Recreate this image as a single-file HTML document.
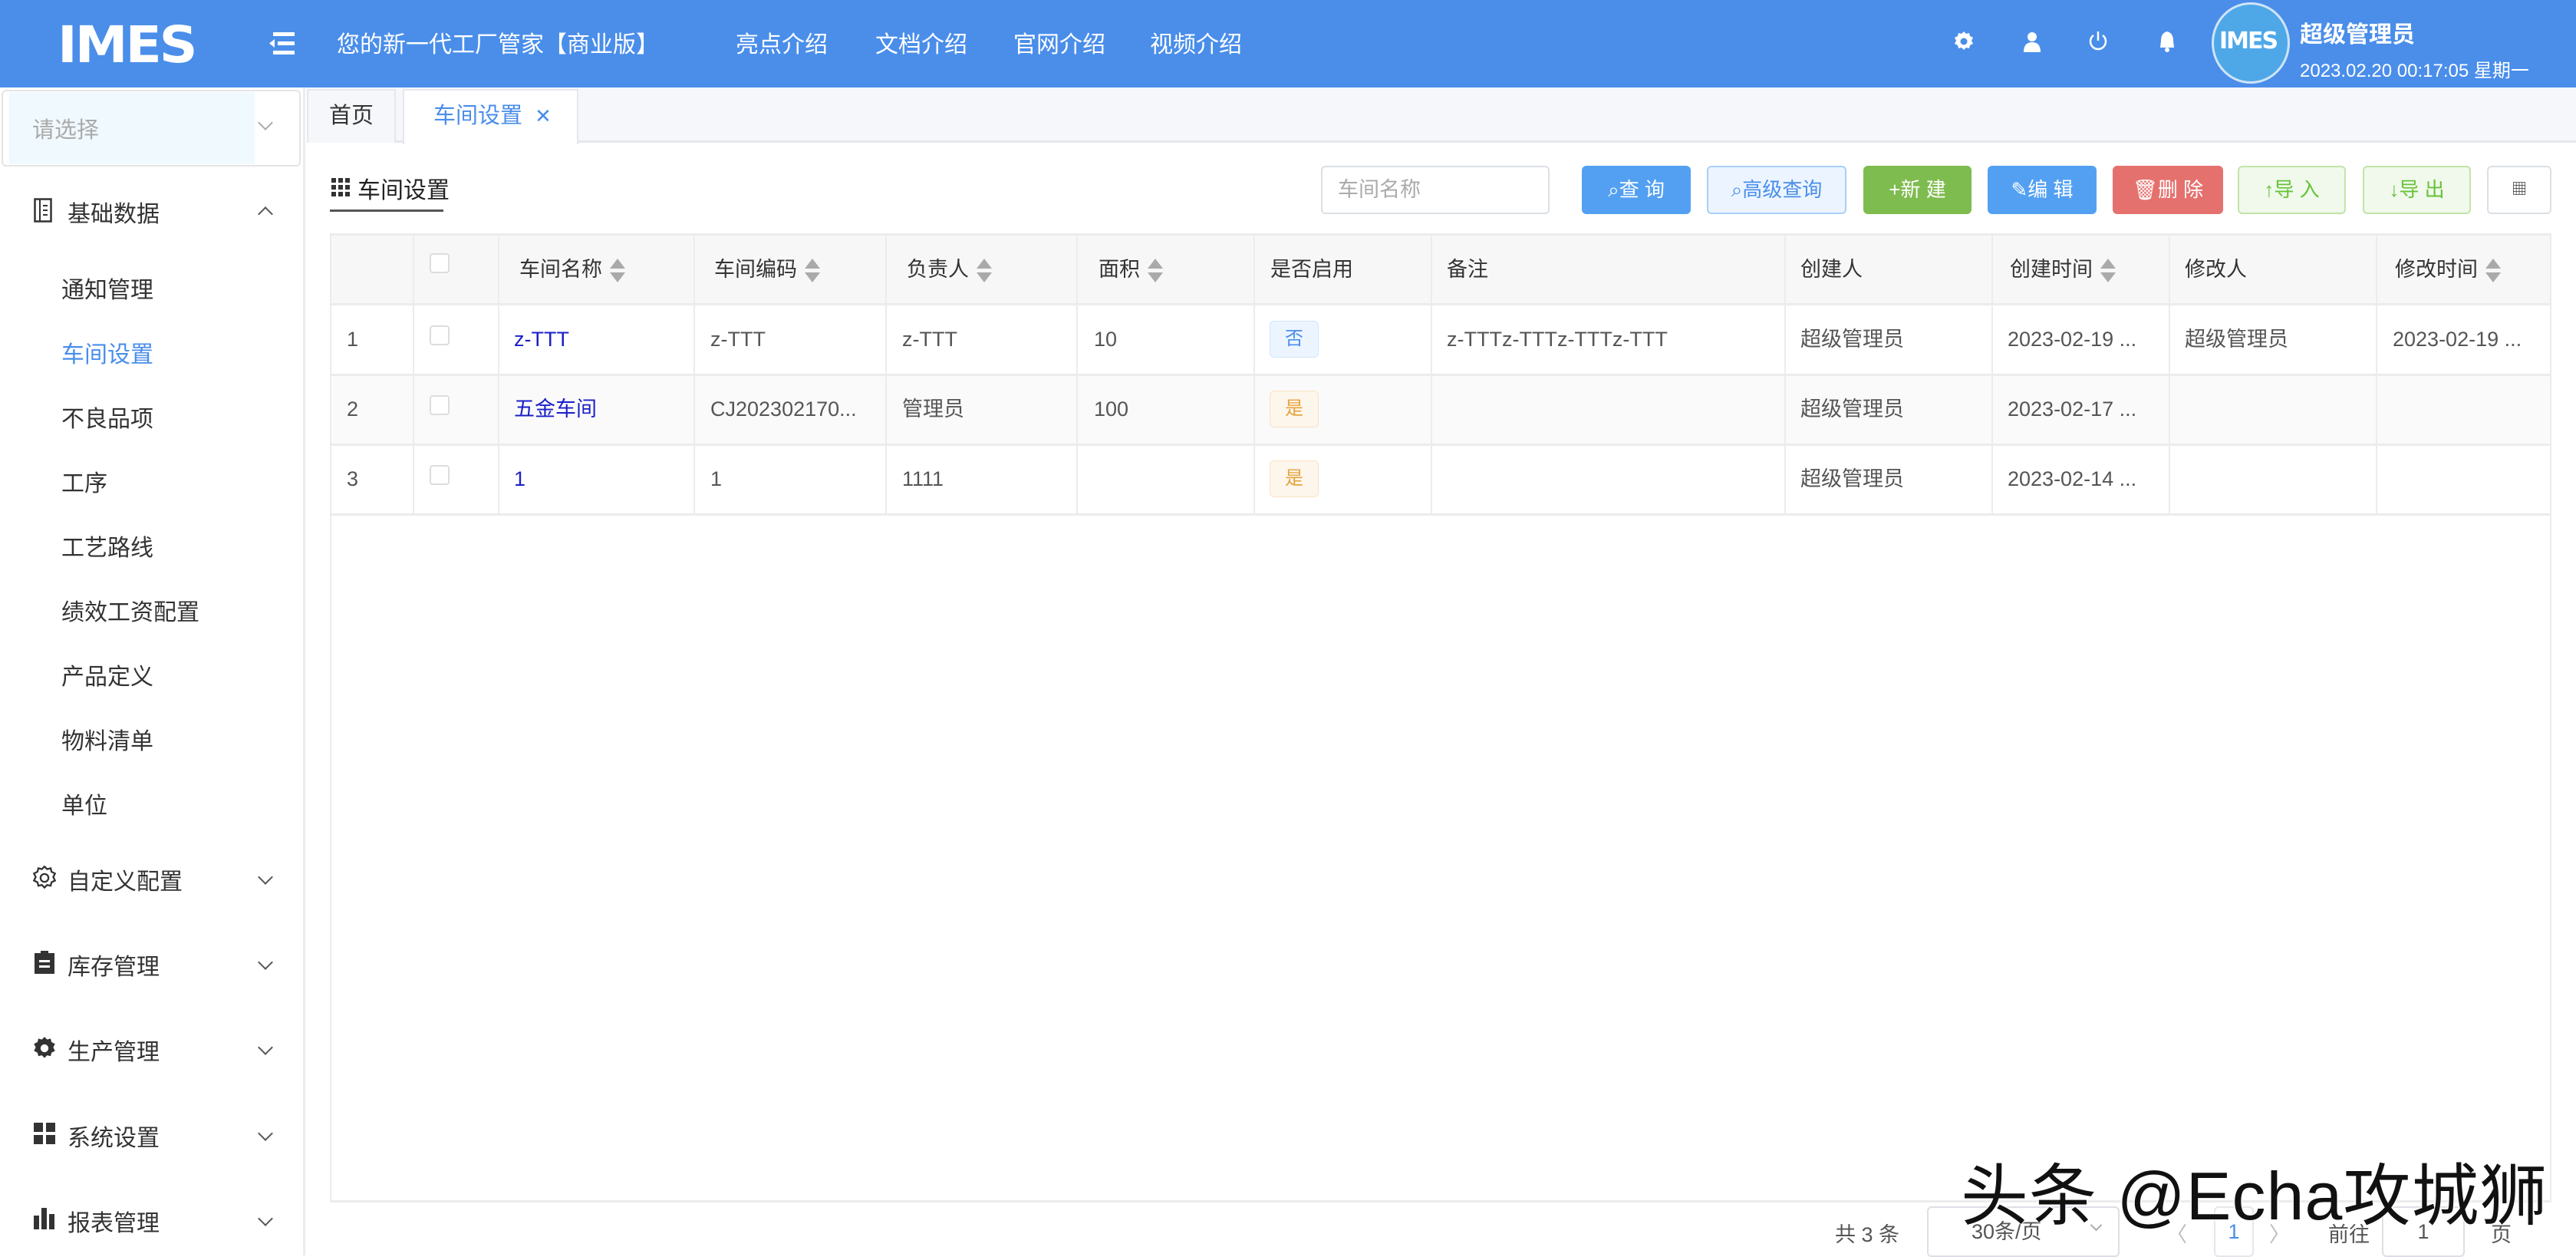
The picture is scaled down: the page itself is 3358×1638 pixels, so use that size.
<!DOCTYPE html>
<html><head><meta charset="utf-8"><style>
*{margin:0;padding:0;box-sizing:border-box}
body{width:3358px;height:1636px;overflow:hidden;background:#fff;font-family:"Liberation Sans","Noto Sans CJK SC",sans-serif;color:#333;position:relative}
.a{position:absolute;white-space:nowrap}
.hdr{left:0;top:0;width:3358px;height:114px;background:#4a8eea}
.nav{color:#fff;font-size:30px;top:33px}
.side{left:0;top:114px;width:398px;height:1522px;background:#fff;border-right:3px solid #ececec}
.mi{font-size:30px;color:#333;left:80px}
.sm{font-size:30px;color:#333;left:46px}
.chev{width:14px;height:14px;border-right:2px solid #555;border-bottom:2px solid #555;transform:rotate(45deg);left:339px}
.th{top:306px;height:90px;background:#f7f7f8;font-size:27px;color:#333;line-height:90px}
.cell{font-size:27px;color:#555;line-height:91px}
.vl{width:2px;background:#ececee}
.hl{height:3px;background:#ececee;left:430px;width:2896px}
.btn{top:216px;height:63px;border-radius:6px;font-size:26px;line-height:63px;text-align:center;color:#fff}
.sort{display:inline-block;vertical-align:middle;margin-left:10px;width:20px;height:34px;position:relative}
.sort:before{content:"";position:absolute;left:0;top:1px;border:10px solid transparent;border-bottom:13px solid #aaa;border-top:0}
.sort:after{content:"";position:absolute;left:0;top:19px;border:10px solid transparent;border-top:13px solid #aaa;border-bottom:0}
.cb{width:26px;height:26px;border:2px solid #ddd;border-radius:4px;background:#fff}
.tag{width:64px;height:48px;border-radius:6px;font-size:24px;line-height:46px;text-align:center}
</style></head><body>
<div class="a hdr"></div>
<div class="a" style="left:75px;top:20px;font-size:66px;font-weight:900;color:#fff;letter-spacing:-3px;font-family:'DejaVu Sans',sans-serif;transform:scaleX(1.05);transform-origin:left">IMES</div>
<svg class="a" style="left:348px;top:42px" width="36" height="30"><rect x="8" y="0" width="28" height="5" fill="#fff"/><rect x="14" y="12" width="22" height="5" fill="#fff"/><rect x="8" y="24" width="28" height="5" fill="#fff"/><path d="M10 9 L3 14.5 L10 20Z" fill="#fff"/></svg>
<div class="a nav" style="left:439px">您的新一代工厂管家【商业版】</div>
<div class="a nav" style="left:959px">亮点介绍</div>
<div class="a nav" style="left:1141px">文档介绍</div>
<div class="a nav" style="left:1321px">官网介绍</div>
<div class="a nav" style="left:1499px">视频介绍</div>
<svg class="a" style="left:2547px;top:40px" width="26" height="28" viewBox="0 0 26 28"><path d="M13 1l3 3 4-1 1 4 4 2-2 4 2 4-4 2-1 4-4-1-3 3-3-3-4 1-1-4-4-2 2-4-2-4 4-2 1-4 4 1z" fill="#fff"/><circle cx="13" cy="14" r="4.5" fill="#4a8eea"/></svg>
<svg class="a" style="left:2637px;top:40px" width="24" height="28"><circle cx="12" cy="8" r="6" fill="#fff"/><path d="M1 28 Q1 15 12 15 Q23 15 23 28Z" fill="#fff"/></svg>
<svg class="a" style="left:2722px;top:39px" width="26" height="30"><path d="M7 7 A10 10 0 1 0 19 7" stroke="#fff" stroke-width="2.5" fill="none"/><line x1="13" y1="2" x2="13" y2="14" stroke="#fff" stroke-width="2.5"/></svg>
<svg class="a" style="left:2813px;top:39px" width="24" height="30"><path d="M12 2 Q4 4 4 14 L3 23 H21 L20 14 Q20 4 12 2Z" fill="#fff"/><circle cx="12" cy="26" r="3" fill="#fff"/></svg>
<div class="a" style="left:2883px;top:3px;width:102px;height:106px;border-radius:50%;background:#4ea8e8;border:3px solid #cfe4f8"></div>
<div class="a" style="left:2893px;top:36px;font-size:30px;font-weight:900;color:#fff;font-family:'DejaVu Sans',sans-serif;letter-spacing:-2px">IMES</div>
<div class="a" style="left:2998px;top:20px;font-size:30px;color:#fff;font-weight:bold">超级管理员</div>
<div class="a" style="left:2998px;top:72px;font-size:24px;color:#fff">2023.02.20 00:17:05 星期一</div>

<div class="a side"></div>
<div class="a" style="left:2px;top:117px;height:100px;border:2px solid #e4e4e4;border-radius:6px;width:390px"></div>
<div class="a" style="left:12px;top:120px;width:320px;height:94px;background:#f0f9fe"></div>
<div class="a" style="left:42px;top:146px;font-size:29px;color:#aaa">请选择</div>
<div class="a chev" style="top:153px;border-color:#aaa"></div>
<svg class="a" style="left:44px;top:258px" width="24" height="32"><rect x="1.5" y="1.5" width="21" height="29" fill="none" stroke="#333" stroke-width="2.5"/><line x1="8" y1="2" x2="8" y2="30" stroke="#333" stroke-width="2"/><line x1="12" y1="10" x2="18" y2="10" stroke="#333" stroke-width="2"/><line x1="12" y1="16" x2="18" y2="16" stroke="#333" stroke-width="2"/><line x1="12" y1="22" x2="18" y2="22" stroke="#333" stroke-width="2"/></svg>
<div class="a mi" style="top:254px;left:88px">基础数据</div>
<div class="a chev" style="top:272px;transform:rotate(225deg)"></div>
<div class="a sm" style="left:80px;top:353px">通知管理</div>
<div class="a sm" style="left:80px;top:437px;color:#4a8eea">车间设置</div>
<div class="a sm" style="left:80px;top:521px">不良品项</div>
<div class="a sm" style="left:80px;top:605px">工序</div>
<div class="a sm" style="left:80px;top:689px">工艺路线</div>
<div class="a sm" style="left:80px;top:773px">绩效工资配置</div>
<div class="a sm" style="left:80px;top:857px">产品定义</div>
<div class="a sm" style="left:80px;top:941px">物料清单</div>
<div class="a sm" style="left:80px;top:1025px">单位</div>
<svg class="a" style="left:42px;top:1128px" width="32" height="32" viewBox="0 0 26 28"><path d="M13 1l3 3 4-1 1 4 4 2-2 4 2 4-4 2-1 4-4-1-3 3-3-3-4 1-1-4-4-2 2-4-2-4 4-2 1-4 4 1z" fill="none" stroke="#333" stroke-width="2"/><circle cx="13" cy="14" r="4.5" fill="none" stroke="#333" stroke-width="2"/></svg>
<div class="a mi" style="top:1124px;left:88px">自定义配置</div><div class="a chev" style="top:1136px"></div>
<svg class="a" style="left:45px;top:1239px" width="26" height="30"><rect x="0" y="3" width="26" height="27" fill="#333"/><rect x="8" y="0" width="10" height="6" fill="#333"/><rect x="6" y="12" width="14" height="3" fill="#fff"/><rect x="6" y="19" width="14" height="3" fill="#fff"/></svg>
<div class="a mi" style="top:1235px;left:88px">库存管理</div><div class="a chev" style="top:1247px"></div>
<svg class="a" style="left:42px;top:1350px" width="32" height="32" viewBox="0 0 26 28"><path d="M13 1l3 3 4-1 1 4 4 2-2 4 2 4-4 2-1 4-4-1-3 3-3-3-4 1-1-4-4-2 2-4-2-4 4-2 1-4 4 1z" fill="#333"/><circle cx="13" cy="14" r="4.5" fill="#fff"/></svg>
<div class="a mi" style="top:1346px;left:88px">生产管理</div><div class="a chev" style="top:1358px"></div>
<svg class="a" style="left:44px;top:1463px" width="28" height="28"><rect width="12" height="12" fill="#333"/><rect x="16" width="12" height="12" fill="#333"/><rect y="16" width="12" height="12" fill="#333"/><rect x="16" y="16" width="12" height="12" fill="#333"/></svg>
<div class="a mi" style="top:1458px;left:88px">系统设置</div><div class="a chev" style="top:1470px"></div>
<svg class="a" style="left:44px;top:1574px" width="28" height="28"><rect y="10" width="7" height="18" fill="#333"/><rect x="10" y="0" width="7" height="28" fill="#333"/><rect x="20" y="8" width="7" height="20" fill="#333"/></svg>
<div class="a mi" style="top:1569px;left:88px">报表管理</div><div class="a chev" style="top:1581px"></div>

<div class="a" style="left:400px;top:114px;width:2958px;height:72px;background:#f5f7fa;border-bottom:3px solid #e4e7ed"></div>
<div class="a" style="left:400px;top:116px;width:116px;height:70px;border:2px solid #e4e7ed;border-bottom:0;background:#f5f7fa;font-size:29px;line-height:66px;text-align:center">首页</div>
<div class="a" style="left:525px;top:116px;width:229px;height:72px;border:2px solid #e4e7ed;border-bottom:0;background:#fff;font-size:29px;line-height:66px;color:#4a8eea;padding-left:38px">车间设置 <span style="font-size:26px;margin-left:8px">✕</span></div>

<svg class="a" style="left:432px;top:232px" width="24" height="24"><g fill="#333"><rect x="0" y="0" width="6" height="6"/><rect x="9" y="0" width="6" height="6"/><rect x="18" y="0" width="6" height="6"/><rect x="0" y="9" width="6" height="6"/><rect x="9" y="9" width="6" height="6"/><rect x="18" y="9" width="6" height="6"/><rect x="0" y="18" width="6" height="6"/><rect x="9" y="18" width="6" height="6"/><rect x="18" y="18" width="6" height="6"/></g></svg>
<div class="a" style="left:466px;top:223px;font-size:30px;color:#222">车间设置</div>
<div class="a" style="left:430px;top:273px;width:148px;height:3px;background:#555"></div>

<div class="a" style="left:1722px;top:216px;width:298px;height:63px;border:2px solid #dcdfe6;border-radius:6px;font-size:27px;color:#aaa;line-height:59px;padding-left:20px">车间名称</div>
<div class="a btn" style="left:2062px;width:142px;background:#53a0f2">⌕查 询</div>
<div class="a btn" style="left:2225px;width:182px;background:#ecf5ff;border:2px solid #a9cff5;color:#4a8eea;line-height:59px">⌕高级查询</div>
<div class="a btn" style="left:2429px;width:141px;background:#7fbc4f">+新 建</div>
<div class="a btn" style="left:2591px;width:142px;background:#53a0f2">✎编 辑</div>
<div class="a btn" style="left:2754px;width:144px;background:#e5716e">🗑删 除</div>
<div class="a btn" style="left:2917px;width:141px;background:#f0f9eb;border:2px solid #c2e4a8;color:#67c23a;line-height:59px">↑导 入</div>
<div class="a btn" style="left:3080px;width:141px;background:#f0f9eb;border:2px solid #c2e4a8;color:#67c23a;line-height:59px">↓导 出</div>
<div class="a btn" style="left:3242px;width:84px;background:#fff;border:2px solid #dcdfe6;color:#333;line-height:59px;font-size:20px">▦</div>

<div class="a th" style="left:430px;width:2896px"></div>
<div class="a hl" style="top:304px"></div>
<div class="a hl" style="top:395px"></div>
<div class="a" style="left:430px;top:488px;width:2896px;height:91px;background:#fafafa"></div>
<div class="a hl" style="top:487px"></div>
<div class="a hl" style="top:578px"></div>
<div class="a hl" style="top:669px"></div>
<div class="a vl" style="left:430px;top:304px;height:1262px"></div>
<div class="a vl" style="left:3324px;top:304px;height:1262px"></div>
<div class="a vl" style="left:538px;top:304px;height:366px"></div>
<div class="a vl" style="left:649px;top:304px;height:366px"></div>
<div class="a vl" style="left:904px;top:304px;height:366px"></div>
<div class="a vl" style="left:1154px;top:304px;height:366px"></div>
<div class="a vl" style="left:1403px;top:304px;height:366px"></div>
<div class="a vl" style="left:1634px;top:304px;height:366px"></div>
<div class="a vl" style="left:1865px;top:304px;height:366px"></div>
<div class="a vl" style="left:2326px;top:304px;height:366px"></div>
<div class="a vl" style="left:2596px;top:304px;height:366px"></div>
<div class="a vl" style="left:2827px;top:304px;height:366px"></div>
<div class="a vl" style="left:3097px;top:304px;height:366px"></div>

<div class="a cb" style="left:560px;top:330px"></div>
<div class="a th" style="left:677px;background:none">车间名称<i class="sort"></i></div>
<div class="a th" style="left:931px;background:none">车间编码<i class="sort"></i></div>
<div class="a th" style="left:1182px;background:none">负责人<i class="sort"></i></div>
<div class="a th" style="left:1432px;background:none">面积<i class="sort"></i></div>
<div class="a th" style="left:1656px;background:none">是否启用</div>
<div class="a th" style="left:1886px;background:none">备注</div>
<div class="a th" style="left:2347px;background:none">创建人</div>
<div class="a th" style="left:2620px;background:none">创建时间<i class="sort"></i></div>
<div class="a th" style="left:2848px;background:none">修改人</div>
<div class="a th" style="left:3122px;background:none">修改时间<i class="sort"></i></div>

<div class="a cell" style="left:452px;top:397px">1</div>
<div class="a cb" style="left:560px;top:424px"></div>
<div class="a cell" style="left:670px;top:397px;color:#1a1fc8">z-TTT</div>
<div class="a cell" style="left:926px;top:397px">z-TTT</div>
<div class="a cell" style="left:1176px;top:397px">z-TTT</div>
<div class="a cell" style="left:1426px;top:397px">10</div>
<div class="a tag" style="left:1655px;top:418px;background:#ecf5ff;border:1px solid #d0e6fb;color:#4a8eea">否</div>
<div class="a cell" style="left:1886px;top:397px">z-TTTz-TTTz-TTTz-TTT</div>
<div class="a cell" style="left:2347px;top:397px">超级管理员</div>
<div class="a cell" style="left:2617px;top:397px">2023-02-19 ...</div>
<div class="a cell" style="left:2848px;top:397px">超级管理员</div>
<div class="a cell" style="left:3119px;top:397px">2023-02-19 ...</div>

<div class="a cell" style="left:452px;top:488px">2</div>
<div class="a cb" style="left:560px;top:515px"></div>
<div class="a cell" style="left:670px;top:488px;color:#1a1fc8">五金车间</div>
<div class="a cell" style="left:926px;top:488px">CJ202302170...</div>
<div class="a cell" style="left:1176px;top:488px">管理员</div>
<div class="a cell" style="left:1426px;top:488px">100</div>
<div class="a tag" style="left:1655px;top:509px;background:#fdf6ec;border:1px solid #f8e3c4;color:#e6a23c">是</div>
<div class="a cell" style="left:2347px;top:488px">超级管理员</div>
<div class="a cell" style="left:2617px;top:488px">2023-02-17 ...</div>

<div class="a cell" style="left:452px;top:579px">3</div>
<div class="a cb" style="left:560px;top:606px"></div>
<div class="a cell" style="left:670px;top:579px;color:#1a1fc8">1</div>
<div class="a cell" style="left:926px;top:579px">1</div>
<div class="a cell" style="left:1176px;top:579px">1111</div>
<div class="a tag" style="left:1655px;top:600px;background:#fdf6ec;border:1px solid #f8e3c4;color:#e6a23c">是</div>
<div class="a cell" style="left:2347px;top:579px">超级管理员</div>
<div class="a cell" style="left:2617px;top:579px">2023-02-14 ...</div>

<div class="a hl" style="top:1564px"></div>
<div class="a" style="left:2392px;top:1587px;font-size:27px;color:#555">共 3 条</div>
<div class="a" style="left:2512px;top:1572px;width:251px;height:66px;border:2px solid #dcdfe6;border-radius:6px;font-size:27px;color:#555;line-height:62px;padding-left:56px">30条/页</div>
<div class="a chev" style="left:2727px;top:1591px;width:11px;height:11px;border-color:#aaa"></div>
<div class="a" style="left:2824px;top:1587px;font-size:27px;color:#bbb">〈</div>
<div class="a" style="left:2886px;top:1572px;width:52px;height:66px;border:2px solid #e4e7ed;border-radius:6px;font-size:27px;color:#4a8eea;line-height:62px;text-align:center">1</div>
<div class="a" style="left:2958px;top:1587px;font-size:27px;color:#bbb">〉</div>
<div class="a" style="left:3035px;top:1587px;font-size:27px;color:#555">前往</div>
<div class="a" style="left:3105px;top:1572px;width:108px;height:66px;border:2px solid #dcdfe6;border-radius:6px;font-size:27px;color:#555;line-height:62px;text-align:center">1</div>
<div class="a" style="left:3247px;top:1587px;font-size:27px;color:#555">页</div>

<div class="a" style="left:2556px;top:1488px;font-size:88px;color:#111;letter-spacing:1px;text-shadow:0 0 3px #fff,0 0 3px #fff">头条 @Echa攻城狮</div>
</body></html>
